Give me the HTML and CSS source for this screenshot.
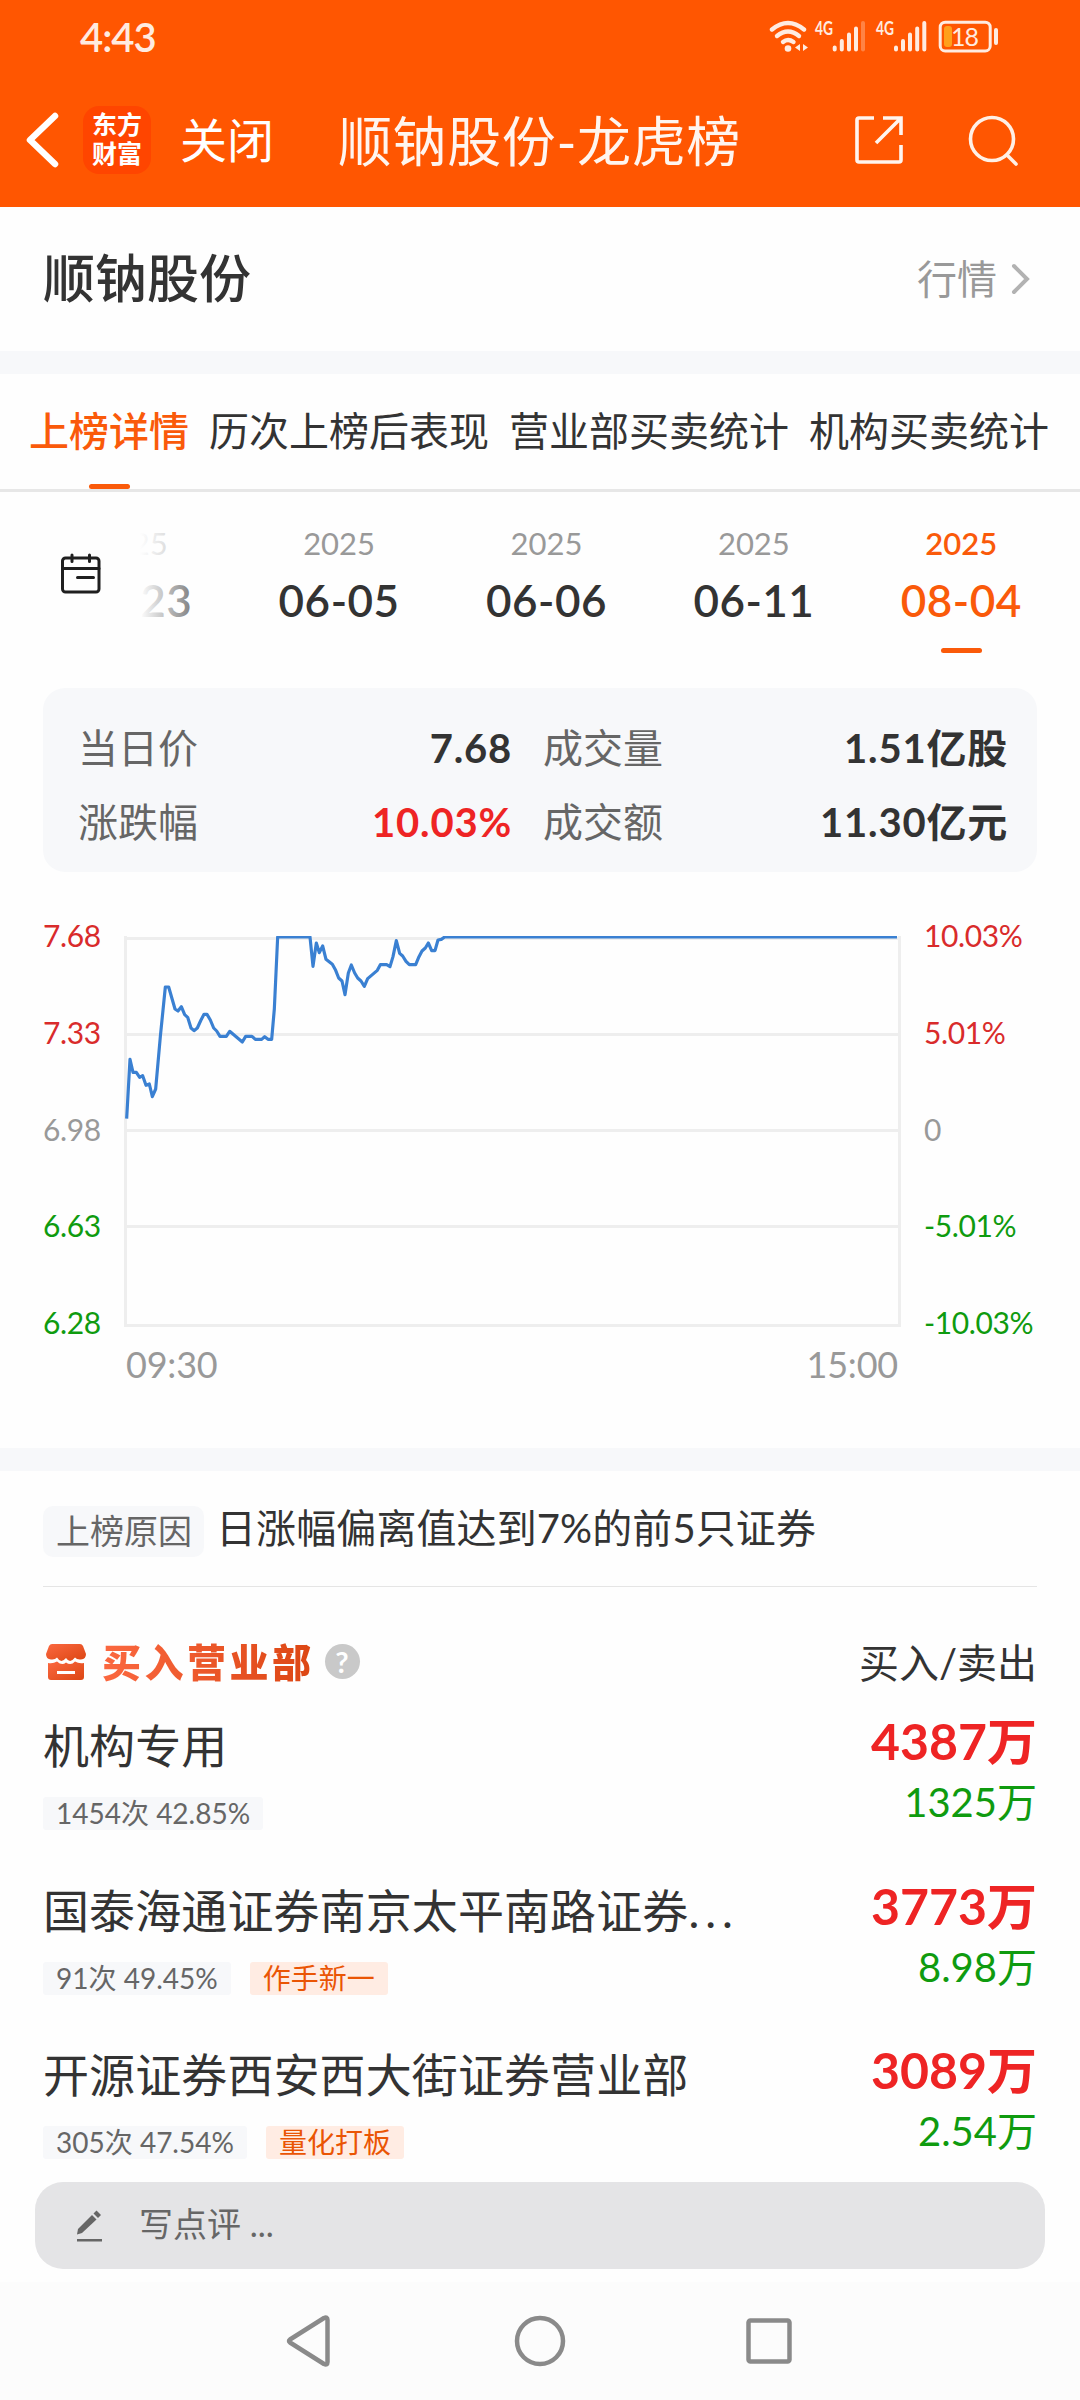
FILE: index.html
```html
<!DOCTYPE html>
<html lang="zh-CN">

<head>
    <meta charset="UTF-8" />
    <meta name="viewport" content="width=device-width, initial-scale=1.0" />
    <title>顺钠股份-龙虎榜</title>
    <link rel="stylesheet" href="styles.css">
</head>

<body>
    <header class="header">
        <div class="status_bar">
            <span class="time">4:43</span>
            <svg class="status_icons" width="232" height="36" viewBox="768 18 232 36" fill="none">
                <!-- wifi -->
                <g stroke="#ffebe0" stroke-width="4.4" stroke-linecap="round">
                    <path d="M772 29.5Q788 16.500 804 29.500" />
                    <path d="M777 36Q788 27 799 36" />
                    <path d="M783 42Q788 38 793.500 42" />
                </g>
                <circle cx="788" cy="48.500" r="3.300" fill="#ffebe0" />
                <path d="M800 44v7l-5-3.500zM803 44v7l5-3.500z" fill="#ffebe0" />
                <!-- sim 1 -->
                <text class="net" x="815" y="34.500" textLength="18" lengthAdjust="spacingAndGlyphs">4G</text>
                <g stroke="#ffebe0" stroke-width="4" stroke-linecap="round">
                    <path d="M834.700 47.500v2M841.800 41v8.500M849 34.500v15M856 28.500v21" />
                    <path d="M863 23v26.500" opacity=".3" />
                </g>
                <!-- sim 2 -->
                <text class="net" x="876" y="34.500" textLength="18" lengthAdjust="spacingAndGlyphs">4G</text>
                <path d="M896 47.500v2M903 41v8.500M910 34.500v15M917.200 28.500v21M924.300 23v26.500" stroke="#ffebe0"
                    stroke-width="4" stroke-linecap="round" />
                <!-- battery -->
                <rect x="940.200" y="22.200" width="50" height="28.800" rx="5" stroke="#ffebe0" stroke-width="3" />
                <rect x="944" y="26" width="8" height="21" rx="3" fill="#ffa01c" />
                <text class="battery" x="951" y="46">18</text>
                <path d="M996 30v13" stroke="#ffebe0" stroke-width="4" stroke-linecap="round" />
            </svg>
        </div>
        <div class="nav_bar">
            <svg class="back" width="34" height="56" viewBox="0 0 34 56" fill="none" stroke="#fff" stroke-width="6.500"
                stroke-linecap="round" stroke-linejoin="round">
                <path d="M29 4L4 28L29 52" />
            </svg>
            <div class="logo">东方<br>财富</div>
            <span class="close">关闭</span>
            <h1 class="title">顺钠股份-龙虎榜</h1>
            <svg class="share" width="50" height="50" viewBox="0 0 50 50" fill="none" stroke="#fff5ef"
                stroke-width="3.600">
                <path d="M20 3H5Q3 3 3 5V45Q3 47 5 47H45Q47 47 47 45V30" />
                <path d="M29 3H47V20M46 4L22 28" />
            </svg>
            <svg class="search" width="52" height="52" viewBox="0 0 52 52" fill="none" stroke="#fff0e6"
                stroke-width="3.600" stroke-linecap="round">
                <circle cx="25" cy="25" r="21.500" />
                <path d="M40 41L49 50" />
            </svg>
        </div>
    </header>

    <section class="stock">
        <h2>顺钠股份</h2>
        <a class="quote">行情
            <svg width="20" height="34" viewBox="0 0 20 34" fill="none" stroke="#b2b2b2" stroke-width="4"
                stroke-linecap="round">
                <path d="M3 4L16 17L3 30" />
            </svg>
        </a>
    </section>

    <nav class="tabs">
        <a class="tab active">上榜详情</a>
        <a class="tab">历次上榜后表现</a>
        <a class="tab">营业部买卖统计</a>
        <a class="tab">机构买卖统计</a>
    </nav>

    <section class="dates">
        <div class="date"><small>2025</small><b>05-23</b></div>
        <div class="date"><small>2025</small><b>06-05</b></div>
        <div class="date"><small>2025</small><b>06-06</b></div>
        <div class="date"><small>2025</small><b>06-11</b></div>
        <div class="date active"><small>2025</small><b>08-04</b></div>
        <div class="calendar">
            <svg width="42" height="42" viewBox="0 0 42 42" fill="none" stroke="#1f1f1f" stroke-width="3"
                stroke-linecap="round">
                <rect x="2.500" y="5" width="36.500" height="34" rx="3" />
                <path d="M2.500 15.500H39M12 2V8.500M29.500 2V8.500M17.500 24.500H33.500" />
            </svg>
        </div>
    </section>

    <section class="summary">
        <span>当日价</span><b>7.68</b><span>成交量</span><b>1.51亿股</b>
        <span>涨跌幅</span><b class="red">10.03%</b><span>成交额</span><b>11.30亿元</b>
    </section>

    <section class="chart">
        <div class="axis">
            <span class="up">7.68</span>
            <span class="up">7.33</span>
            <span>6.98</span>
            <span class="down">6.63</span>
            <span class="down">6.28</span>
        </div>
        <div class="plot">
            <svg width="777" height="391" viewBox="0 0 777 391" fill="none">
                <path stroke="#eee" stroke-width="3"
                    d="M0 2.500H777M0 98.500H777M0 194.500H777M0 290.500H777M0 389.500H777M1.500 0V391M775.500 0V391" />
                <g transform="translate(-24 -36) scale(.33333)">
                    <polyline stroke="#3a80d2" stroke-width="9.500" stroke-linejoin="round"
                        points="80,656 90,478 99,517 109,517 119,532 128,527 138,556 148,552 157,590 167,567 181,410 196,261 206,261 225,327 234,333 244,320 254,344 263,352 273,384 282,392 292,384 303,360 312,343 321,343 331,360 341,384 350,393 360,409 379,409 389,394 427,426 437,409 456,409 466,418 485,418 494,410 504,418 515,418 523,327 533,111 630,111 639,199 649,129 658,158 668,138 678,178 697,193 707,211 716,234 726,243 735,284 745,219 754,195 764,219 773,234 783,243 793,259 803,236 832,211 841,194 860,194 870,200 879,170 889,122 899,160 908,168 918,184 928,194 947,194 957,170 966,153 976,144 985,129 995,152 1005,152 1014,120 1024,118 1034,111 2391,111" />
                </g>
            </svg>
            <div class="hours"><span>09:30</span><span>15:00</span></div>
        </div>
        <div class="axis">
            <span class="up">10.03%</span>
            <span class="up">5.01%</span>
            <span>0</span>
            <span class="down">-5.01%</span>
            <span class="down">-10.03%</span>
        </div>
    </section>

    <section class="reason">
        <span class="label">上榜原因</span>
        <span class="text">日涨幅偏离值达到7%的前5只证券</span>
    </section>

    <section class="list">
        <div class="list_head">
            <svg width="40" height="36" viewBox="0 0 40 36">
                <defs>
                    <linearGradient id="shop" x1="0" y1="0" x2="1" y2="1">
                        <stop offset="0" stop-color="#fb6840" />
                        <stop offset="1" stop-color="#dc4613" />
                    </linearGradient>
                </defs>
                <path fill="url(#shop)"
                    d="M6 0H34Q36 0 37 2L40 10Q40 15 35 15.500Q31 16 29 13.500Q24 20 20 14Q15 20 11 13.500Q9 16 5 15.500Q0 15 0 10L3 2Q4 0 6 0Z" />
                <path fill="url(#shop)" fill-rule="evenodd"
                    d="M2 19Q7 20 11 17.500Q16 22 20 18.500Q25 22 29 17.500Q33 20 38 19V33Q38 36 35 36H5Q2 36 2 33ZM11 27V30H29V27Z" />
            </svg>
            <h3>买入营业部</h3>
            <i class="help">?</i>
            <span class="columns">买入/卖出</span>
        </div>
        <div class="row">
            <div class="branch">
                <p>机构专用</p>
                <span class="tag">1454次 42.85%</span>
            </div>
            <div class="amount"><b>4387万</b><span>1325万</span></div>
        </div>
        <div class="row">
            <div class="branch">
                <p>国泰海通证券南京太平南路证券<span class="dots">...</span></p>
                <span class="tag">91次 49.45%</span><span class="tag hot">作手新一</span>
            </div>
            <div class="amount"><b>3773万</b><span>8.98万</span></div>
        </div>
        <div class="row">
            <div class="branch">
                <p>开源证券西安西大街证券营业部</p>
                <span class="tag">305次 47.54%</span><span class="tag hot">量化打板</span>
            </div>
            <div class="amount"><b>3089万</b><span>2.54万</span></div>
        </div>
    </section>

    <div class="comment">
        <svg width="26" height="34" viewBox="0 0 26 34" fill="#666">
            <path d="M0 25.500L1 20L15 6L19.500 10.500L5 24Z" />
            <path d="M16.500 4.500L19.500 1.500L24 6L21 9Z" />
            <rect y="30" width="25" height="2.500" />
        </svg>
        <span>写点评 ...</span>
    </div>

    <footer class="system_nav">
        <svg width="540" height="60" viewBox="270 0 540 60" fill="none" stroke="#8a8a8a" stroke-width="4.500"
            stroke-linejoin="round">
            <path d="M290 28.500Q288 30 290 31.500L324 53Q327.500 54.500 327.500 51V9Q327.500 5.500 324 7Z" />
            <circle cx="540" cy="30" r="23" />
            <rect x="748.500" y="9.500" width="41" height="41" rx="2" />
        </svg>
    </footer>
</body>

</html>
```
FILE: styles.css
```css
* {
    box-sizing: border-box;
}

body {
    margin: 0;
    width: 1080px;
    height: 2400px;
    overflow: hidden;
    background-color: #fefefe;
    color: #333;
    font-family: Lato, "Noto Sans CJK SC", sans-serif;
    font-size: 40px;
}

h1,
h2,
h3,
p {
    margin: 0;
}

svg {
    display: block;
    flex-shrink: 0;
}

/* header */
.header {
    height: 207px;
    background-color: #ff5601;
    color: #fff;
}

.status_bar {
    display: flex;
    justify-content: space-between;
    height: 72px;
    padding: 18px 80px 0 80px;
}

.time {
    line-height: 38px;
    color: #ffebe0;
    font-weight: 600;
    letter-spacing: -1px;
}

.net {
    font-size: 18px;
    font-weight: bold;
    fill: #ffebe0;
}

.battery {
    font-size: 25px;
    fill: #ffebe0;
    letter-spacing: -1px;
}

.nav_bar {
    display: flex;
    align-items: center;
    height: 135px;
    padding: 0 61px 0 26px;
}

.logo {
    width: 68px;
    height: 68px;
    margin-left: 23px;
    padding-top: 4px;
    border-radius: 16px;
    background-color: #ff4500;
    font-size: 25px;
    font-weight: 700;
    line-height: 29px;
    text-align: center;
}

.close {
    margin-left: 29px;
    font-size: 47px;
    line-height: 60px;
}

.title {
    margin: 4px auto 0 64px;
    color: #fff5ef;
    font-size: 54px;
    font-weight: 400;
    letter-spacing: .6px;
    line-height: 64px;
}

.share {
    margin-right: 63px;
}

/* stock name */
.stock {
    display: flex;
    justify-content: space-between;
    align-items: center;
    height: 167px;
    padding: 0 49px 0 43px;
    border-bottom: 23px solid #f7f8fa;
}

.stock h2 {
    margin-top: -2px;
    font-size: 52px;
    font-weight: 500;
    line-height: 64px;
}

.quote {
    display: flex;
    align-items: center;
    gap: 14px;
    color: #999;
    line-height: 50px;
}

/* tabs */
.tabs {
    display: flex;
    gap: 20px;
    height: 118px;
    padding-left: 29px;
    border-bottom: 3px solid #e7e7e7;
}

.tab {
    position: relative;
    line-height: 114px;
    white-space: nowrap;
}

.tab.active {
    color: #fa5a0a;
    font-weight: 500;
}

.tab.active::after,
.date.active::after {
    content: "";
    position: absolute;
    left: 50%;
    bottom: 0;
    width: 41px;
    height: 5px;
    margin-left: -20px;
    border-radius: 3px;
    background-color: #fa5a0a;
}

/* dates */
.dates {
    position: relative;
    display: flex;
    height: 196px;
    padding-left: 28px;
}

.date {
    position: relative;
    flex: 0 0 207.400px;
    height: 161px;
    padding-top: 31px;
    text-align: center;
}

.date small,
.date b {
    display: block;
}

.date small {
    color: #999;
    font-size: 31px;
    line-height: 40px;
}

.date b {
    margin-top: 9px;
    font-size: 44px;
    font-weight: 600;
    letter-spacing: .5px;
    line-height: 56px;
}

.date.active,
.date.active small {
    color: #fa5a0a;
    font-weight: 600;
}

/* covers the scrolled-out dates */
.calendar {
    position: absolute;
    left: 0;
    top: 0;
    width: 225px;
    height: 190px;
    padding: 61px 0 0 60px;
    background: linear-gradient(to right, #fefefe 140px, rgba(254, 254, 254, .35) 195px, rgba(254, 254, 254, 0) 225px);
}

/* summary */
.summary {
    display: grid;
    grid-template-columns: 152px 282px 152px 1fr;
    grid-auto-rows: 74px;
    width: 994px;
    height: 184px;
    margin: 0 auto;
    padding: 23px 29px 0 35px;
    border-radius: 22px;
    background-color: #f7f8fa;
    line-height: 74px;
}

.summary span {
    color: #666;
}

.summary b {
    letter-spacing: .8px;
    text-align: right;
}

.summary span:nth-of-type(even) {
    padding-left: 31px;
}

.summary .red {
    color: #ee2424;
}

/* chart */
.chart {
    display: flex;
    height: 599px;
    padding: 64px 0 0 43px;
    border-bottom: 23px solid #f7f8fa;
}

.axis {
    display: flex;
    flex-direction: column;
    justify-content: space-between;
    height: 427px;
    margin-top: -21px;
    color: #999;
    font-size: 30px;
    letter-spacing: -.4px;
    line-height: 40px;
}

.axis:first-child {
    width: 81px;
}

.axis:last-child {
    margin-left: 23px;
}

.axis .up {
    color: #d92b2b;
}

.axis .down {
    color: #0f9b0f;
}

.hours {
    display: flex;
    justify-content: space-between;
    padding: 14px 3px 0 2px;
    color: #999;
    font-size: 36px;
    letter-spacing: -.2px;
    line-height: 46px;
}

/* reason */
.reason {
    display: flex;
    align-items: flex-start;
    gap: 12px;
    width: 994px;
    height: 116px;
    margin: 0 auto;
    padding-top: 35px;
    border-bottom: 1px solid #e5e5e5;
}

.reason .label {
    height: 51px;
    padding: 0 12px 0 13px;
    border-radius: 10px;
    background-color: #f7f8fa;
    color: #666;
    font-size: 34px;
    line-height: 49px;
}

.reason .text {
    letter-spacing: .1px;
    line-height: 44px;
}

/* list */
.list {
    padding: 43px 43px 0;
}

.list_head {
    display: flex;
    align-items: center;
    height: 63px;
    padding-left: 3px;
}

.list_head h3 {
    margin-left: 16px;
    background: linear-gradient(to right, #fb6840, #dc4613);
    -webkit-background-clip: text;
    background-clip: text;
    color: transparent;
    font-size: 39px;
    font-weight: 900;
    letter-spacing: 3.500px;
    line-height: 50px;
}

.help {
    width: 35px;
    height: 35px;
    margin-left: 10px;
    border-radius: 50%;
    background-color: #c9c9c9;
    color: #fff;
    font-size: 29px;
    font-style: normal;
    font-weight: bold;
    line-height: 35px;
    text-align: center;
}

.columns {
    margin: -2px 0 0 auto;
}

.row {
    display: flex;
    justify-content: space-between;
    height: 164.600px;
    padding-top: 23px;
}

.branch p {
    margin-bottom: 21px;
    font-size: 46px;
    letter-spacing: .1px;
    line-height: 60px;
    white-space: nowrap;
}

.branch .dots {
    letter-spacing: 6px;
}

.tag {
    display: inline-block;
    height: 33px;
    margin-right: 19px;
    padding: 0 13px;
    border-radius: 3px;
    background-color: #f7f8fa;
    color: #666;
    font-size: 28px;
    line-height: 32px;
    vertical-align: top;
}

.tag.hot {
    background-color: #ffece3;
    color: #ea5504;
}

.amount {
    margin-top: -5px;
    text-align: right;
}

.amount b,
.amount span {
    display: block;
    line-height: 61px;
}

.amount b {
    color: #ee2424;
    font-size: 50px;
}

.amount span {
    color: #0f9b0f;
}

/* comment bar */
.comment {
    position: absolute;
    left: 35px;
    top: 2182px;
    display: flex;
    align-items: center;
    gap: 36px;
    width: 1010px;
    height: 87px;
    padding-left: 42px;
    border-radius: 28px;
    background-color: #e4e4e6;
    color: #666;
    font-size: 34px;
    line-height: 50px;
}

.comment span {
    margin-top: -3px;
}

/* system buttons */
.system_nav {
    position: absolute;
    left: 0;
    top: 2282px;
    width: 1080px;
    height: 118px;
    padding: 29px 270px 0;
    background-color: #fcfcfc;
}
```
